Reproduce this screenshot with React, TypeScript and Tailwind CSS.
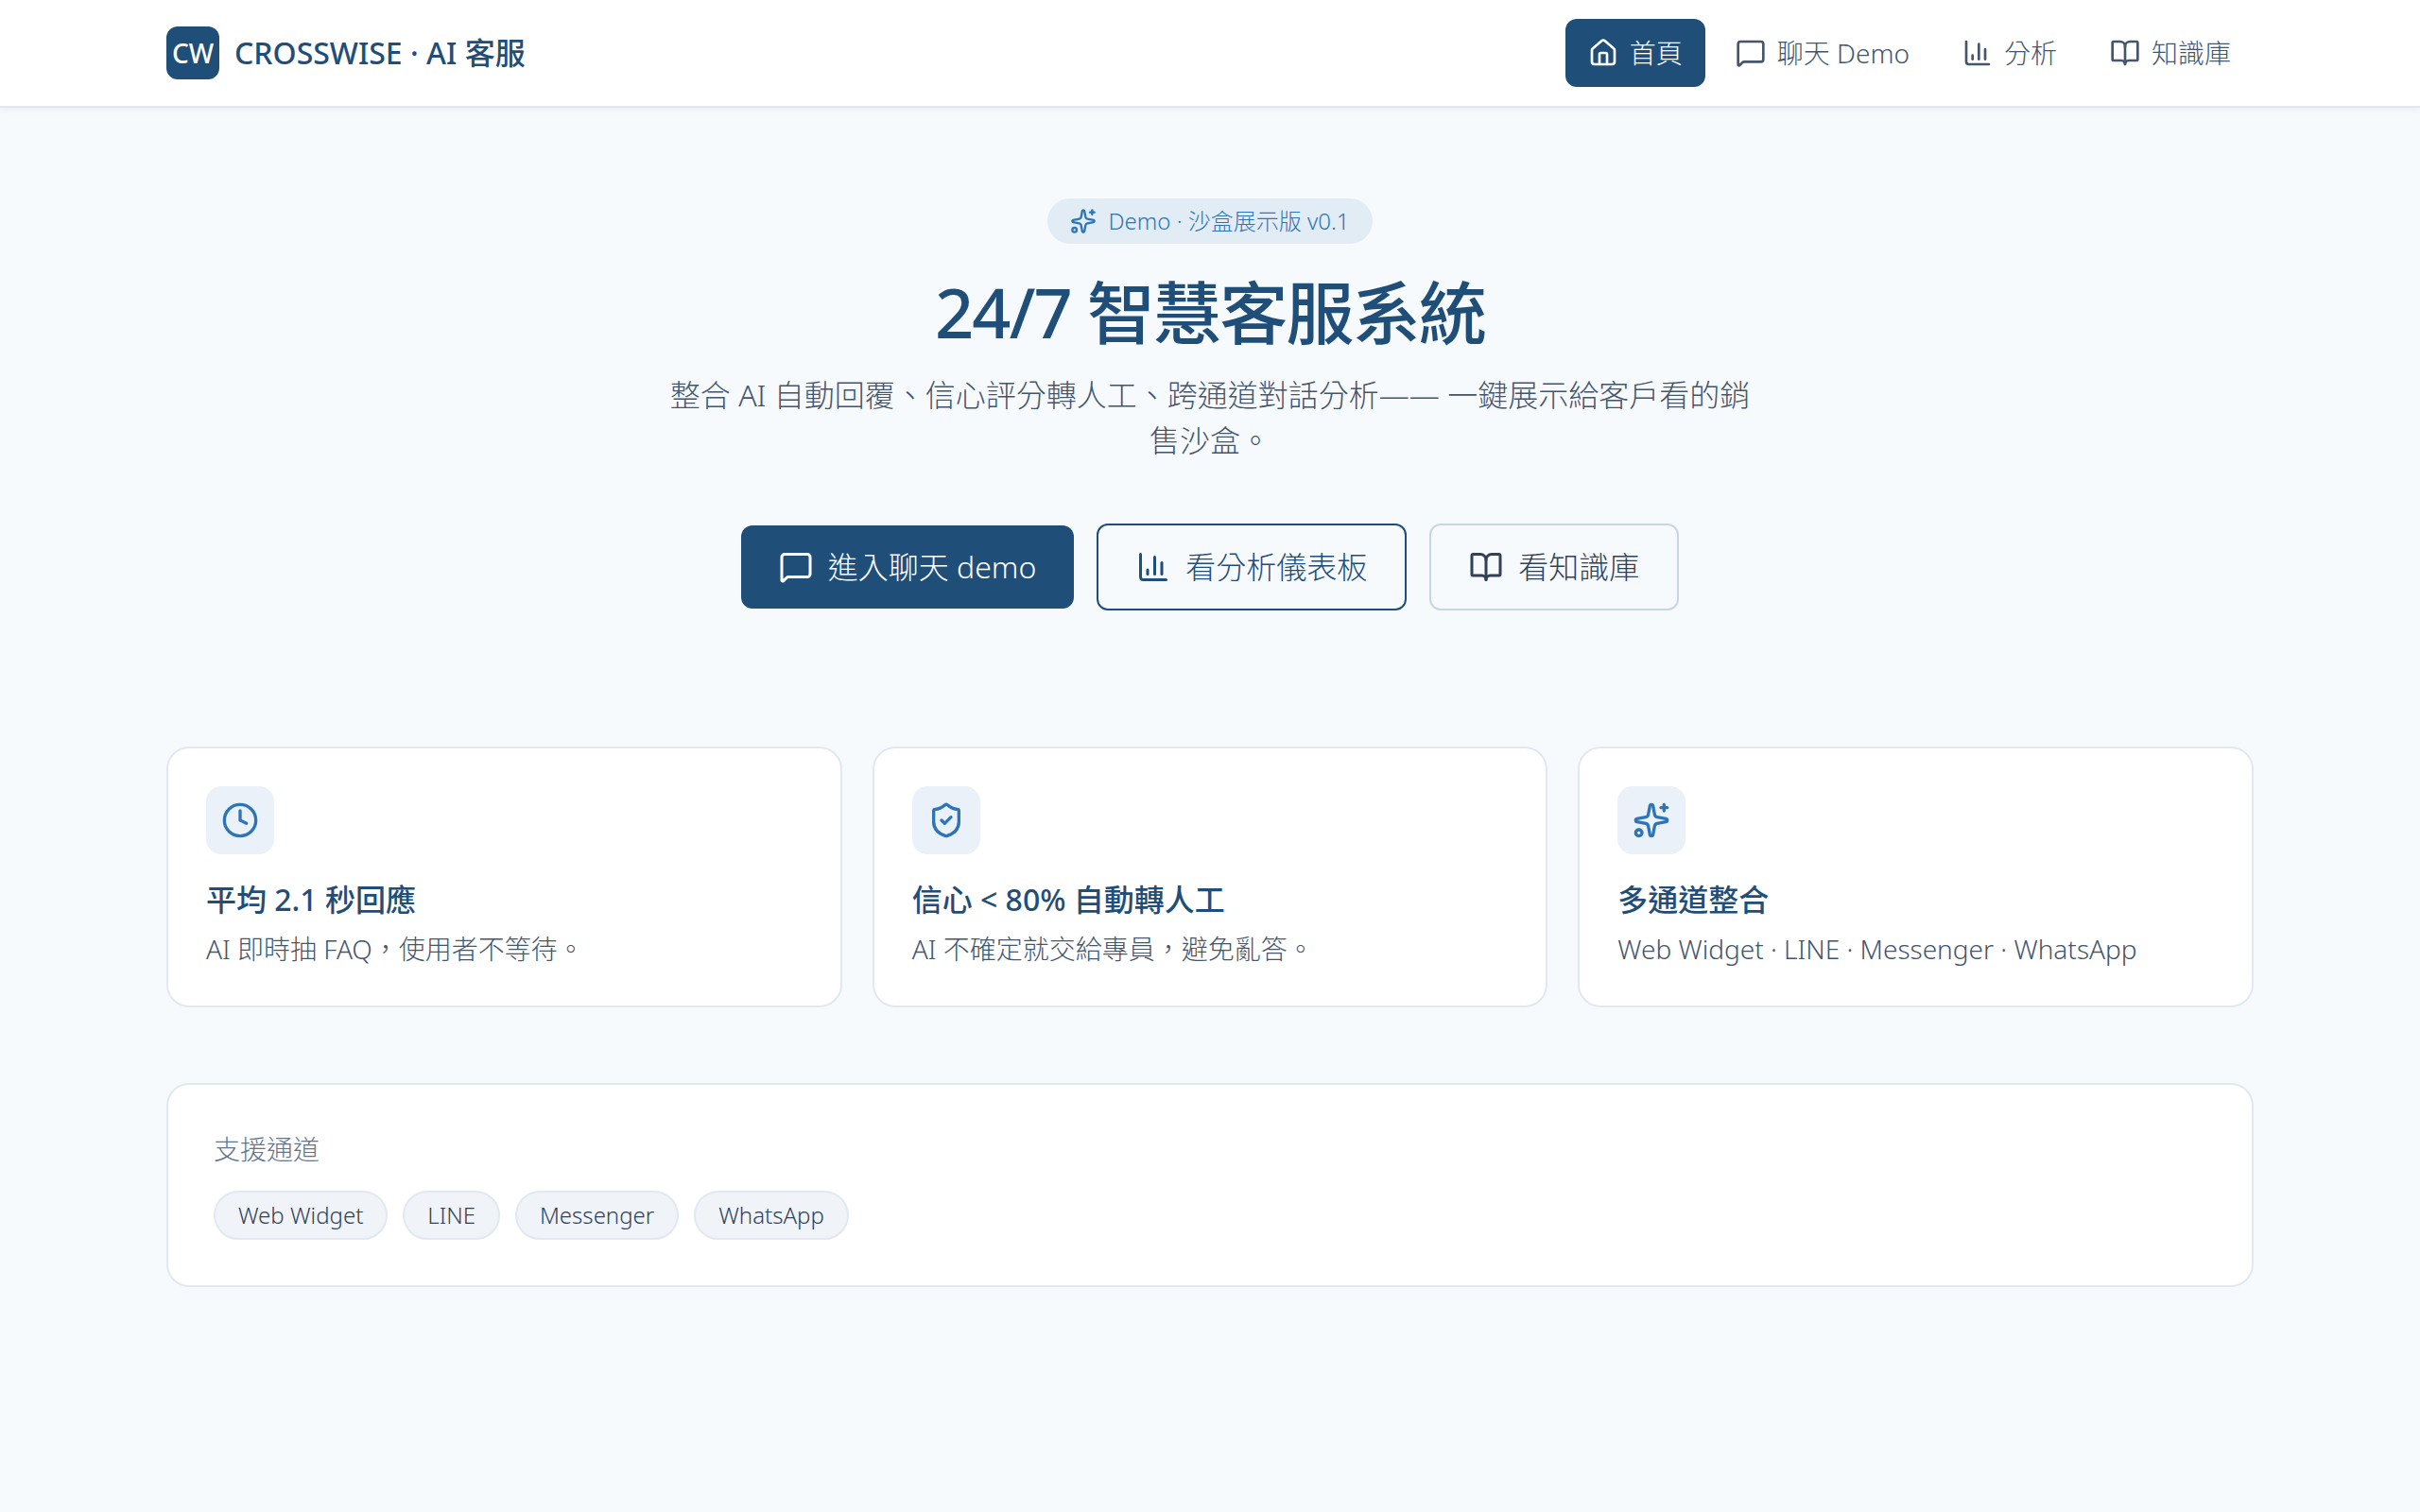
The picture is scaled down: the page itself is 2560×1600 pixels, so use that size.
import {
  BookOpen,
  ChartColumn,
  Clock,
  House,
  MessageSquare,
  ShieldCheck,
  Sparkles,
  type LucideIcon,
} from 'lucide-react';

interface NavItem {
  label: string;
  icon: LucideIcon;
  active?: boolean;
}

interface Feature {
  title: string;
  description: string;
  icon: LucideIcon;
}

const NAV_ITEMS: NavItem[] = [
  { label: '首頁', icon: House, active: true },
  { label: '聊天 Demo', icon: MessageSquare },
  { label: '分析', icon: ChartColumn },
  { label: '知識庫', icon: BookOpen },
];

const FEATURES: Feature[] = [
  {
    title: '平均 2.1 秒回應',
    description: 'AI 即時抽 FAQ，使用者不等待。',
    icon: Clock,
  },
  {
    title: '信心 < 80% 自動轉人工',
    description: 'AI 不確定就交給專員，避免亂答。',
    icon: ShieldCheck,
  },
  {
    title: '多通道整合',
    description: 'Web Widget · LINE · Messenger · WhatsApp',
    icon: Sparkles,
  },
];

const CHANNELS = ['Web Widget', 'LINE', 'Messenger', 'WhatsApp'];

function Header() {
  return (
    <header className="border-b-2 border-[#e2e8f0] bg-white shadow-[0_2px_6px_rgba(15,23,42,0.06)]">
      <div className="mx-auto flex h-28 max-w-[2304px] items-center justify-between px-12">
        <div className="flex items-center gap-4 text-[32px] leading-[48px] font-medium text-[#1f4e79]">
          <div className="flex h-14 w-14 items-center justify-center rounded-xl bg-[#1f4e79] text-[28px] text-white">
            CW
          </div>
          <span className="whitespace-nowrap">CROSSWISE · AI 客服</span>
        </div>
        <nav className="flex items-center gap-2">
          {NAV_ITEMS.map(({ label, icon: Icon, active }) => (
            <a
              key={label}
              href="#"
              className={`flex items-center gap-3 rounded-xl px-6 py-4 text-[28px] leading-10 whitespace-nowrap ${
                active ? 'bg-[#1f4e79] text-white' : 'text-slate-600'
              }`}
            >
              <Icon className="h-8 w-8" />
              {label}
            </a>
          ))}
        </nav>
      </div>
    </header>
  );
}

function Hero() {
  return (
    <section className="flex flex-col items-center text-center">
      <div className="flex items-center gap-3 rounded-full bg-[#e2ecf5] px-6 py-2 text-2xl leading-8 text-[#2e75b6]">
        <Sparkles className="h-7 w-7" />
        <span>Demo · 沙盒展示版 v0.1</span>
      </div>
      <h1 className="mt-8 text-7xl leading-[80px] font-medium tracking-tight text-[#1f4e79]">
        24/7 智慧客服系統
      </h1>
      <p className="mt-6 max-w-[1152px] text-[32px] leading-[48px] text-slate-600">
        整合 AI 自動回覆、信心評分轉人工、跨通道對話分析—— 一鍵展示給客戶看的銷售沙盒。
      </p>
      <div className="mt-16 flex items-center gap-6 text-[32px] leading-[48px]">
        <a
          href="#"
          className="flex items-center gap-4 rounded-xl bg-[#1f4e79] px-10 py-5 text-white"
        >
          <MessageSquare className="h-9 w-9" />
          進入聊天 demo
        </a>
        <a
          href="#"
          className="flex items-center gap-4 rounded-xl border-2 border-[#1f4e79] px-10 py-5 text-[#1f4e79]"
        >
          <ChartColumn className="h-9 w-9" />
          看分析儀表板
        </a>
        <a
          href="#"
          className="flex items-center gap-4 rounded-xl border-2 border-slate-300 px-10 py-5 text-slate-700"
        >
          <BookOpen className="h-9 w-9" />
          看知識庫
        </a>
      </div>
    </section>
  );
}

function FeatureCard({ title, description, icon: Icon }: Feature) {
  return (
    <div className="rounded-3xl border-2 border-slate-200 bg-white p-10">
      <div className="flex h-18 w-18 items-center justify-center rounded-2xl bg-[#eaf1f9] text-[#2e75b6]">
        <Icon className="h-10 w-10" />
      </div>
      <h3 className="mt-6 text-[32px] leading-[48px] font-medium text-[#1f4e79]">
        {title}
      </h3>
      <p className="mt-2 text-[28px] leading-10 whitespace-nowrap text-slate-600">
        {description}
      </p>
    </div>
  );
}

export default function App() {
  return (
    <div
      lang="zh-Hant"
      className="min-h-screen bg-[#f7fafd] font-['Noto_Sans','Noto_Sans_CJK_TC',sans-serif] font-light"
    >
      <Header />
      <main className="mx-auto max-w-[2304px] px-12 pt-24">
        <Hero />
        <section className="mt-36 grid grid-cols-3 gap-8">
          {FEATURES.map((feature) => (
            <FeatureCard key={feature.title} {...feature} />
          ))}
        </section>
        <section className="mt-20 rounded-3xl border-2 border-slate-200 bg-white p-12">
          <div className="text-[28px] leading-10 text-slate-500">支援通道</div>
          <div className="mt-6 flex gap-4">
            {CHANNELS.map((channel) => (
              <span
                key={channel}
                className="rounded-full border-2 border-slate-200 bg-[#f0f4f9] px-6 py-2 text-2xl leading-8 text-slate-700"
              >
                {channel}
              </span>
            ))}
          </div>
        </section>
      </main>
    </div>
  );
}
